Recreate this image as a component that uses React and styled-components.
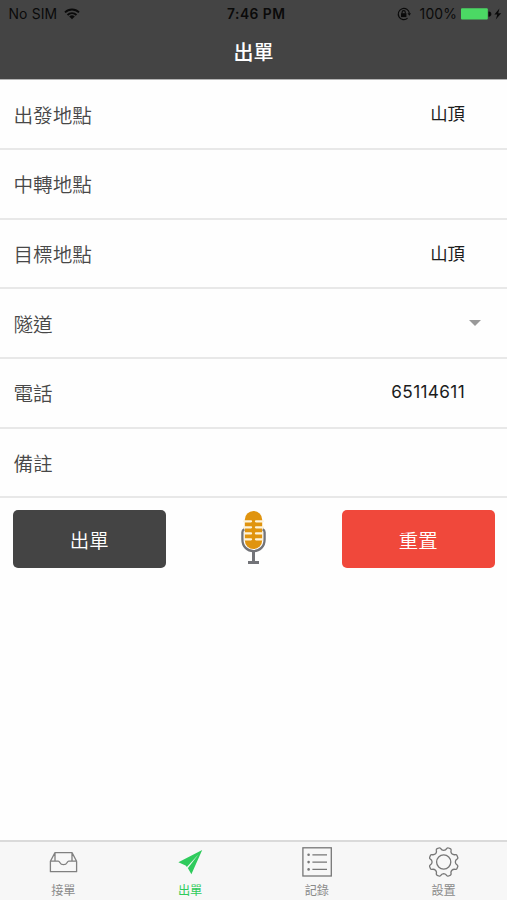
import styled, { createGlobalStyle } from 'styled-components';

const GlobalStyle = createGlobalStyle`
  *,
  *::before,
  *::after {
    box-sizing: border-box;
  }

  body {
    margin: 0;
    background-color: #fff;
    font-family: Inter, 'Noto Sans CJK TC', sans-serif;
  }
`;

const Screen = styled.div`
  display: flex;
  flex-direction: column;
  width: 507px;
  height: 900px;
  overflow: hidden;
  background-color: #fefefe;
`;

const Header = styled.header`
  flex: none;
  height: 79px;
  background-color: #444;
  box-shadow: 0 1px 0 #b4b4b4;
`;

const StatusBar = styled.div`
  display: grid;
  grid-template-columns: 1fr auto 1fr;
  align-items: center;
  height: 27px;
  padding: 0 5px 0 8.5px;
  font-size: 13.9px;
  letter-spacing: 0.15px;
  color: #0a0a0a;
`;

const StatusGroup = styled.div`
  display: flex;
  align-items: center;
  justify-content: ${(props) => (props.$end ? 'flex-end' : 'flex-start')};
  gap: ${(props) => props.$gap};

  & svg {
    display: block;
  }
`;

const Time = styled.span`
  padding-left: 2px;
  font-size: 13.8px;
  font-weight: 600;
  letter-spacing: 0.5px;
`;

const Title = styled.h1`
  margin: 0;
  font-family: 'Noto Sans CJK TC', sans-serif;
  font-size: 20px;
  font-weight: 500;
  line-height: 50px;
  text-align: center;
  color: #fff;
`;

const Form = styled.div`
  flex: none;
  padding-top: 1.6px;
`;

const Row = styled.div`
  display: flex;
  align-items: center;
  justify-content: space-between;
  height: 69.6px;
  padding: 0 ${(props) => (props.$select ? '26px' : '42px')} 0 13.5px;
  border-bottom: 2px solid #e8e8e8;
`;

const Label = styled.span`
  font-family: 'Noto Sans CJK TC', sans-serif;
  font-size: 19.6px;
  font-weight: 350;
  color: #484848;
`;

const Value = styled.span`
  margin-top: ${(props) => (props.$latin ? '-2px' : '-3px')};
  font-size: ${(props) => (props.$latin ? '17.2px' : '17.4px')};
  letter-spacing: ${(props) => (props.$latin ? '0.35px' : '0')};
  color: #1c1c1c;
`;

const Caret = styled.span`
  margin-top: -1px;
  border: 6px solid transparent;
  border-top-color: #999;
  border-bottom: 0;
`;

const Actions = styled.div`
  display: flex;
  align-items: flex-start;
  justify-content: space-between;
  padding: 12px 12.5px 0 13px;
`;

const Button = styled.button`
  width: 152.5px;
  height: 58px;
  padding: 0;
  border: none;
  border-radius: 5px;
  font-family: 'Noto Sans CJK TC', sans-serif;
  font-size: 19.4px;
  font-weight: 350;
  color: #fff;
  background-color: ${(props) => (props.$danger ? '#f0483b' : '#444')};
`;

const MicButton = styled.button`
  display: flex;
  padding: 0 1px 0 0;
  border: none;
  background: none;
`;

const TabBar = styled.nav`
  display: grid;
  grid-template-columns: repeat(4, 1fr);
  flex: none;
  height: 60px;
  margin-top: auto;
  border-top: 2px solid #dadada;
  background-color: #f7f7f7;
`;

const Tab = styled.div`
  display: flex;
  flex-direction: column;
  align-items: center;
  padding-top: 5px;
  font-family: 'Noto Sans CJK TC', sans-serif;
  font-size: 12.2px;
  line-height: 18px;
  color: ${(props) => (props.$active ? '#2fcb5c' : '#8a8a8a')};

  & svg {
    display: block;
    margin-bottom: 4px;
  }
`;

function WifiIcon() {
  return (
    <svg width="16" height="12" viewBox="0 0 16 12" fill="none">
      <path
        d="M1 4.4a10 10 0 0 1 14 0M3.5 7a6.4 6.4 0 0 1 9 0"
        stroke="#0a0a0a"
        strokeWidth="1.9"
      />
      <path d="M8 11.2L5.2 8.5a4 4 0 0 1 5.6 0Z" fill="#0a0a0a" />
    </svg>
  );
}

function RotationLockIcon() {
  return (
    <svg width="14" height="14" viewBox="0 0 14 14" fill="none">
      <path
        d="M10.6 11.2A5.6 5.6 0 1 1 12.4 6.4"
        stroke="#0a0a0a"
        strokeWidth="1.1"
      />
      <path d="M10.5 6.3h3.5l-1.7 2.5z" fill="#0a0a0a" />
      <rect x="4" y="6.2" width="5.4" height="3.9" fill="#0a0a0a" />
      <path
        d="M5.1 6.5V5.2a1.6 1.6 0 0 1 3.2 0v1.3"
        stroke="#0a0a0a"
        strokeWidth="1.1"
      />
    </svg>
  );
}

function BatteryIcon() {
  return (
    <svg width="42" height="14" viewBox="0 0 42 14">
      <rect x="1" y="1.3" width="26.8" height="11.2" rx="1" fill="#4bd964" />
      <path
        d="M28.8 4.8a2.3 2.3 0 0 1 0 4.6z"
        fill="#0a0a0a"
        stroke="#0a0a0a"
        strokeWidth="0.6"
      />
      <path d="M39.4 1.6L34.4 7.6h2.9L35.8 12.4 41.2 6.2h-3z" fill="#0a0a0a" />
    </svg>
  );
}

function MicIcon() {
  return (
    <svg width="26" height="56" viewBox="0 0 26 56" fill="none">
      <rect x="4.8" y="1" width="17.4" height="38" rx="8.7" fill="#e0940f" />
      <path
        d="M4 11.3h7M4 17.3h7M4 23.4h7M4 29.3h7M16 11.3h7M16 17.3h7M16 23.4h7M16 29.3h7"
        stroke="#fdf3dc"
        strokeWidth="2.3"
        strokeLinecap="round"
      />
      <path
        d="M4.3 19.3Q2.4 20 2.4 22.2v7.3c0 7 4.8 11.6 11.1 11.6s11.1-4.6 11.1-11.6v-7.3q0-2.2-1.9-2.9"
        stroke="#727378"
        strokeWidth="2.3"
      />
      <path d="M13.5 41v11M8 52.5h11" stroke="#727378" strokeWidth="3" />
    </svg>
  );
}

function InboxIcon() {
  return (
    <svg width="30" height="30" viewBox="0 0 30 30" fill="none">
      <path
        d="M2.4 14.2V24.7h26.2V14.2h-7.9c-.8 0-1.1.6-1.5 1.3a4.2 4.2 0 0 1-7.4 0c-.4-.7-.7-1.3-1.5-1.3zM2.4 14.2l4.6-8.6h17l4.6 8.6M7 5.6v8.6M24 5.6v8.6"
        stroke="#808080"
        strokeWidth="1.3"
        strokeLinejoin="round"
      />
    </svg>
  );
}

function PlaneIcon() {
  return (
    <svg width="30" height="30" viewBox="0 0 30 30">
      <path d="M27.2 3L3.4 15.2l7.2 3.4 2.2 2.4 3.6 6.2z" fill="#2fcb5c" />
      <path d="M23.4 7.6L11.6 20.2l1.2 1z" fill="#f7f7f7" />
    </svg>
  );
}

function ListIcon() {
  return (
    <svg width="30" height="30" viewBox="0 0 30 30" fill="none">
      <g stroke="#777" strokeWidth="1.3">
        <rect x="0.9" y="0.8" width="28.4" height="28.2" />
        <path d="M10.4 7.8H25M10.4 15.1H25M10.4 22.4H25" />
      </g>
      <g fill="#777">
        <circle cx="6.6" cy="7.8" r="1.3" />
        <circle cx="6.6" cy="15.1" r="1.3" />
        <circle cx="6.6" cy="22.4" r="1.3" />
      </g>
    </svg>
  );
}

const TEETH = 8;

// point on a circle round the gear's centre, angle in degrees
function polar(radius, angle) {
  const rad = (angle * Math.PI) / 180;
  const x = 14.7 + radius * Math.cos(rad);
  const y = 15 + radius * Math.sin(rad);
  return `${x.toFixed(2)} ${y.toFixed(2)}`;
}

function gearPath() {
  let d = `M${polar(11.6, 0)}`;
  for (let i = 0; i < TEETH; i++) {
    const a = i * 45;
    d += `C${polar(11.7, a + 6)} ${polar(12.5, a + 11)} ${polar(14, a + 13)}`;
    d += `Q${polar(14.9, a + 14.5)} ${polar(14.8, a + 19)}`;
    d += `L${polar(14.8, a + 26)}`;
    d += `Q${polar(14.9, a + 30.5)} ${polar(14, a + 32)}`;
    d += `C${polar(12.5, a + 34)} ${polar(11.7, a + 39)} ${polar(11.6, a + 45)}`;
  }
  return `${d}Z`;
}

function GearIcon() {
  return (
    <svg width="30" height="30" viewBox="0 0 30 30" fill="none">
      <g stroke="#777" strokeWidth="1.3">
        <path d={gearPath()} />
        <circle cx="14.7" cy="15" r="7.1" />
      </g>
    </svg>
  );
}

const fields = [
  { label: '出發地點', value: '山頂' },
  { label: '中轉地點' },
  { label: '目標地點', value: '山頂' },
  { label: '隧道', select: true },
  { label: '電話', value: '65114611', latin: true },
  { label: '備註' },
];

const tabs = [
  { label: '接單', icon: <InboxIcon /> },
  { label: '出單', icon: <PlaneIcon />, active: true },
  { label: '記錄', icon: <ListIcon /> },
  { label: '設置', icon: <GearIcon /> },
];

function App() {
  return (
    <>
      <GlobalStyle />
      <Screen>
        <Header>
          <StatusBar>
            <StatusGroup $gap="7px">
              <span>No SIM</span>
              <WifiIcon />
            </StatusGroup>
            <Time>7:46 PM</Time>
            <StatusGroup $end $gap="3px">
              <StatusGroup $gap="9px">
                <RotationLockIcon />
                <span>100%</span>
              </StatusGroup>
              <BatteryIcon />
            </StatusGroup>
          </StatusBar>
          <Title>出單</Title>
        </Header>

        <Form>
          {fields.map((field) => (
            <Row key={field.label} $select={field.select}>
              <Label>{field.label}</Label>
              {field.value && <Value $latin={field.latin}>{field.value}</Value>}
              {field.select && <Caret />}
            </Row>
          ))}
        </Form>

        <Actions>
          <Button>出單</Button>
          <MicButton>
            <MicIcon />
          </MicButton>
          <Button $danger>重置</Button>
        </Actions>

        <TabBar>
          {tabs.map((tab) => (
            <Tab key={tab.label} $active={tab.active}>
              {tab.icon}
              {tab.label}
            </Tab>
          ))}
        </TabBar>
      </Screen>
    </>
  );
}

export default App;
